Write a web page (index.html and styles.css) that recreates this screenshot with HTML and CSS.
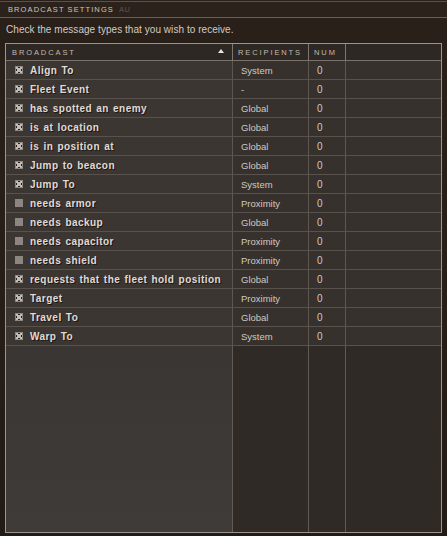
FILE: index.html
```html
<!DOCTYPE html>
<html>
<head>
<meta charset="utf-8">
<link rel="stylesheet" href="styles.css">
</head>
<body>
<div class="window">
  <div class="titlebar"><span class="title">BROADCAST SETTINGS</span><span class="au">AU</span></div>
  <div class="intro">Check the message types that you wish to receive.</div>
  <div class="table">
    <div class="row head">
      <div class="cell c1">BROADCAST<span class="arrow"></span></div>
      <div class="cell c2">RECIPIENTS</div>
      <div class="cell c3">NUM</div>
      <div class="cell c4"></div>
    </div>
    <div class="row"><div class="cell c1"><span class="cb on"></span>Align To</div><div class="cell c2">System</div><div class="cell c3">0</div><div class="cell c4"></div></div>
    <div class="row"><div class="cell c1"><span class="cb on"></span>Fleet Event</div><div class="cell c2">-</div><div class="cell c3">0</div><div class="cell c4"></div></div>
    <div class="row"><div class="cell c1"><span class="cb on"></span>has spotted an enemy</div><div class="cell c2">Global</div><div class="cell c3">0</div><div class="cell c4"></div></div>
    <div class="row"><div class="cell c1"><span class="cb on"></span>is at location</div><div class="cell c2">Global</div><div class="cell c3">0</div><div class="cell c4"></div></div>
    <div class="row"><div class="cell c1"><span class="cb on"></span>is in position at</div><div class="cell c2">Global</div><div class="cell c3">0</div><div class="cell c4"></div></div>
    <div class="row"><div class="cell c1"><span class="cb on"></span>Jump to beacon</div><div class="cell c2">Global</div><div class="cell c3">0</div><div class="cell c4"></div></div>
    <div class="row"><div class="cell c1"><span class="cb on"></span>Jump To</div><div class="cell c2">System</div><div class="cell c3">0</div><div class="cell c4"></div></div>
    <div class="row"><div class="cell c1"><span class="cb"></span>needs armor</div><div class="cell c2">Proximity</div><div class="cell c3">0</div><div class="cell c4"></div></div>
    <div class="row"><div class="cell c1"><span class="cb"></span>needs backup</div><div class="cell c2">Global</div><div class="cell c3">0</div><div class="cell c4"></div></div>
    <div class="row"><div class="cell c1"><span class="cb"></span>needs capacitor</div><div class="cell c2">Proximity</div><div class="cell c3">0</div><div class="cell c4"></div></div>
    <div class="row"><div class="cell c1"><span class="cb"></span>needs shield</div><div class="cell c2">Proximity</div><div class="cell c3">0</div><div class="cell c4"></div></div>
    <div class="row"><div class="cell c1"><span class="cb on"></span>requests that the fleet hold position</div><div class="cell c2">Global</div><div class="cell c3">0</div><div class="cell c4"></div></div>
    <div class="row"><div class="cell c1"><span class="cb on"></span>Target</div><div class="cell c2">Proximity</div><div class="cell c3">0</div><div class="cell c4"></div></div>
    <div class="row"><div class="cell c1"><span class="cb on"></span>Travel To</div><div class="cell c2">Global</div><div class="cell c3">0</div><div class="cell c4"></div></div>
    <div class="row"><div class="cell c1"><span class="cb on"></span>Warp To</div><div class="cell c2">System</div><div class="cell c3">0</div><div class="cell c4"></div></div>
    <div class="row filler">
      <div class="cell c1"></div><div class="cell c2"></div><div class="cell c3"></div><div class="cell c4"></div>
    </div>
  </div>
</div>
</body>
</html>
```
FILE: styles.css
```css
* { box-sizing: border-box; }
html, body { margin: 0; padding: 0; background: #1e1713; }
.window {
  width: 447px;
  height: 536px;
  background: linear-gradient(180deg, #2a201a 0%, #271e18 60%, #221a15 100%);
  display: flex;
  flex-direction: column;
  font-family: "Liberation Sans", "DejaVu Sans", sans-serif;
  color: #cfc7bf;
  overflow: hidden;
}
.titlebar {
  height: 17px;
  margin-top: 1px;
  border-top: 1px solid #5e5048;
  border-bottom: 1px solid #6a5f57;
  display: flex;
  align-items: center;
  padding-left: 8px;
  font-size: 7.5px;
  letter-spacing: 1.1px;
  background: #2c221c;
}
.title { color: #cdc5bd; }
.au { color: #5f554d; margin-left: 5px; letter-spacing: 0.5px; }
.intro {
  height: 25px;
  display: flex;
  align-items: center;
  padding-left: 6px;
  padding-bottom: 3px;
  font-size: 10px;
  color: #d2cac2;
  letter-spacing: 0.05px;
}
.table {
  margin: 0 5px 3px 5px;
  flex: 1;
  border: 1px solid #9c948d;
  display: flex;
  flex-direction: column;
}
.row {
  display: grid;
  grid-template-columns: 227px 76px 37px 1fr;
  height: 19px;
  border-bottom: 1px solid #59524c;
  background: #36312d;
}
.cell {
  display: flex;
  align-items: center;
  border-right: 1px solid #5e5650;
  font-size: 10px;
  white-space: nowrap;
  overflow: hidden;
}
.cell.c4 { border-right: none; }
.row .c1 {
  background: #3b3632;
  padding-left: 9px;
  font-weight: bold;
  color: #e0dad4;
  letter-spacing: 0.45px;
  word-spacing: 1px;
  text-shadow: 1px 1px 0 #1c1816;
}
.row .c2 { padding-left: 8px; color: #cfc9c3; font-size: 9.5px; }
.row .c3 { padding-left: 8px; color: #cfc9c3; }
.row.head {
  height: 17px;
  border-bottom: 1px solid #7a726b;
  background: #2e2824;
}
.row.head .cell {
  font-size: 7.5px;
  letter-spacing: 1.9px;
  font-weight: normal;
  color: #c0b9b2;
  border-right-color: #7e766f;
  text-shadow: none;
  background: #2e2824;
}
.row.head .c1 { padding-left: 6px; position: relative; }
.row.head .c2 { padding-left: 5px; }
.row.head .c3 { padding-left: 5px; }
.arrow {
  position: absolute;
  right: 8px;
  top: 5px;
  width: 0;
  height: 0;
  border-left: 3.5px solid transparent;
  border-right: 3.5px solid transparent;
  border-bottom: 4px solid #e8e4e0;
}
.cb {
  width: 8px;
  height: 8px;
  margin-right: 7px;
  flex: none;
  background: #8b8681;
}
.cb.on {
  background:
    linear-gradient(45deg, transparent 40%, #c2bcb6 40%, #c2bcb6 60%, transparent 60%),
    linear-gradient(-45deg, transparent 40%, #c2bcb6 40%, #c2bcb6 60%, transparent 60%),
    #2a2624;
  border: 1px solid #8e8882;
}
.row.filler {
  flex: 1;
  height: auto;
  border-bottom: none;
  background: #2f2a26;
}
.row.filler .c1 { background: linear-gradient(180deg, #3a3633, #3f3b38); }
.row.filler .cell { border-right-color: #625a54; }
```
